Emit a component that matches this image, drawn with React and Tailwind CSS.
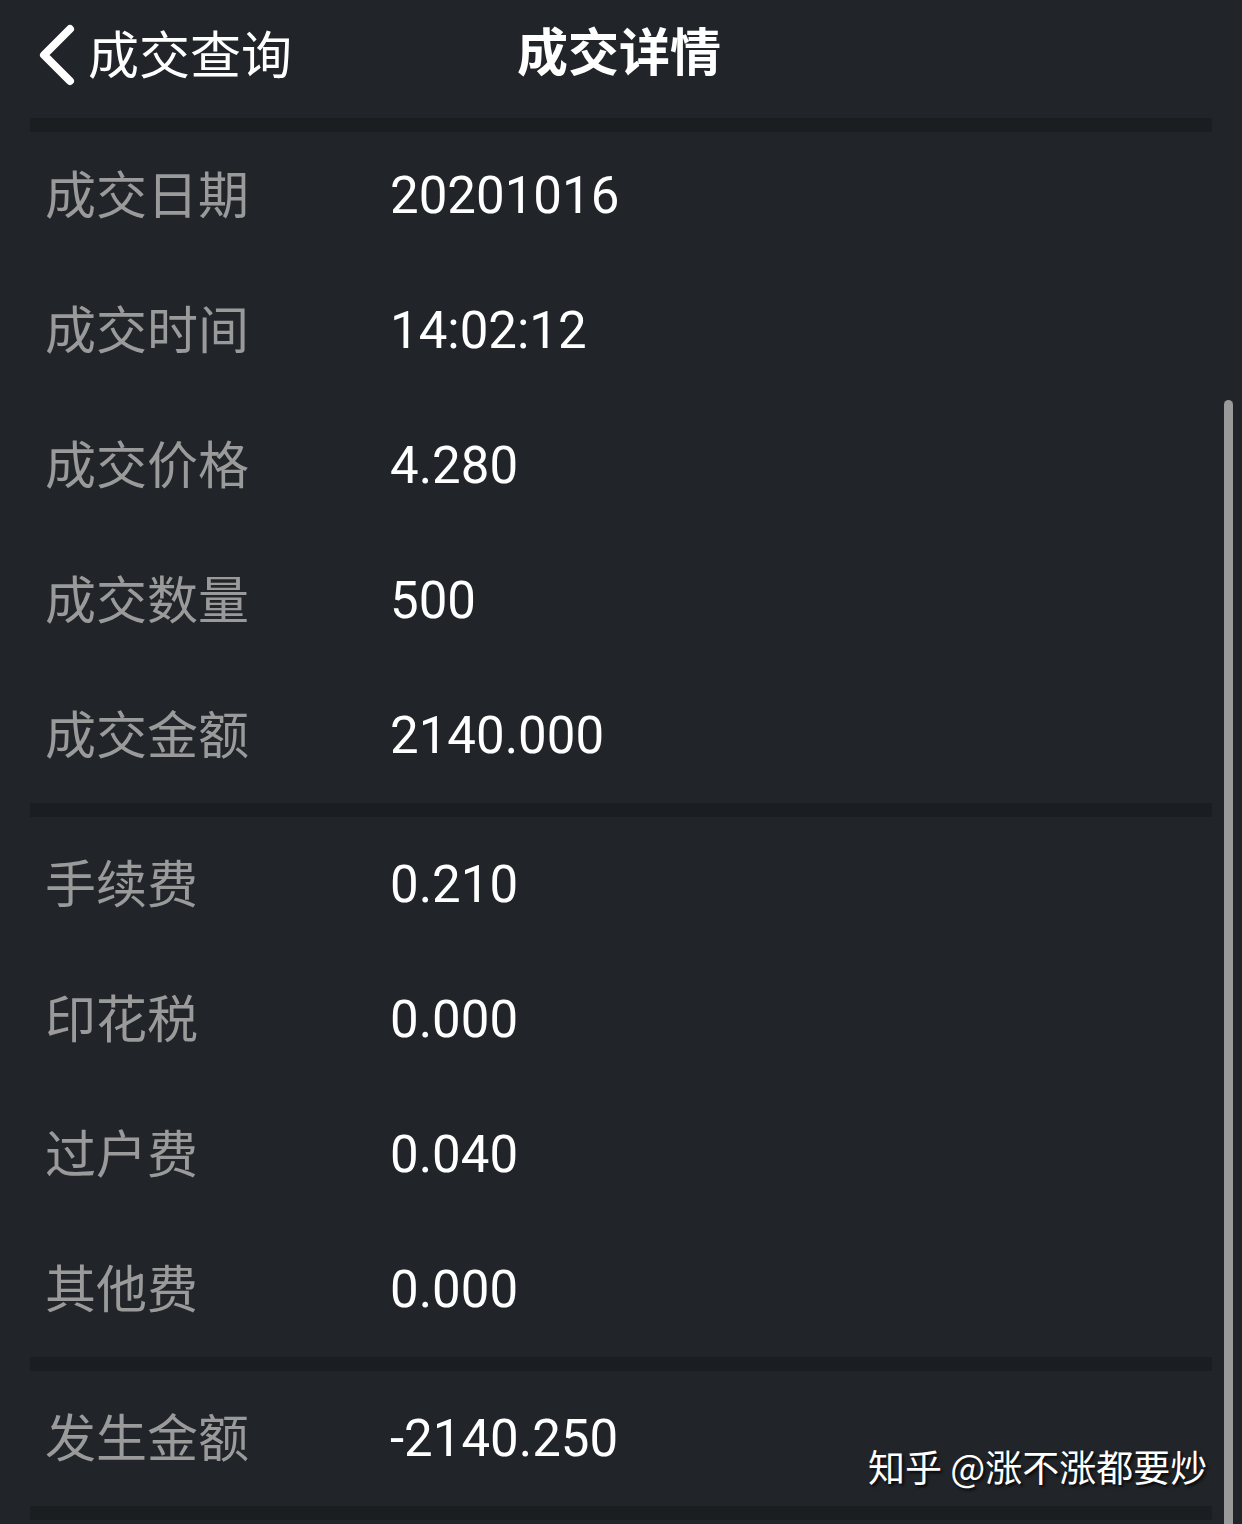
import React from 'react';

const sections = [
  [
    ['成交日期', '20201016'],
    ['成交时间', '14:02:12'],
    ['成交价格', '4.280'],
    ['成交数量', '500'],
    ['成交金额', '2140.000'],
  ],
  [
    ['手续费', '0.210'],
    ['印花税', '0.000'],
    ['过户费', '0.040'],
    ['其他费', '0.000'],
  ],
  [['发生金额', '-2140.250']],
];

const cjk = { fontFamily: '"Noto Sans CJK SC", "Noto Sans", sans-serif' };
const num = { fontFamily: 'Roboto, "Noto Sans", sans-serif' };

const Bar = () => <div className="mx-[30px] h-[14px] bg-[#1b1e21]" />;

const Row = ({ label, value }) => (
  <div className="flex h-[135px] items-center pl-[45px]">
    <div className="w-[345px] pb-[6px] text-[51px] leading-none text-[#9a9a9a]" style={cjk}>
      {label}
    </div>
    <div className="text-[51px] leading-none text-white" style={num}>
      {value}
    </div>
  </div>
);

export default function App() {
  return (
    <div className="relative h-[1524px] w-[1242px] overflow-hidden bg-[#212529]">
      <div className="relative flex h-[118px] items-start pt-[24px]">
        <div className="flex items-center pl-[36px]">
          <svg width="42" height="62" viewBox="0 0 42 62" className="mr-[10px]">
            <polyline
              points="34,5 8,31 34,57"
              fill="none"
              stroke="white"
              strokeWidth="8"
              strokeLinecap="round"
              strokeLinejoin="round"
            />
          </svg>
          <span className="pb-[6px] text-[51px] leading-none text-white" style={cjk}>
            成交查询
          </span>
        </div>
        <div
          className="absolute left-[517px] top-[24px] text-[51px] font-bold leading-none text-white"
          style={cjk}
        >
          成交详情
        </div>
      </div>
      <Bar />
      <div className="-mt-[4px]">
        {sections[0].map(([l, v]) => (
          <Row key={l} label={l} value={v} />
        ))}
      </div>
      <Bar />
      <div>
        {sections[1].map(([l, v]) => (
          <Row key={l} label={l} value={v} />
        ))}
      </div>
      <Bar />
      <div>
        {sections[2].map(([l, v]) => (
          <Row key={l} label={l} value={v} />
        ))}
      </div>
      <Bar />

      <div className="absolute left-[1224px] top-[400px] h-[1200px] w-[9px] rounded-full bg-[#9a9a9a]" />

      <div
        className="absolute left-[868px] top-[1448px] text-[37px] leading-none text-white [text-shadow:2px_2px_3px_rgba(0,0,0,0.8)]"
        style={cjk}
      >
        知乎 @涨不涨都要炒
      </div>
    </div>
  );
}
